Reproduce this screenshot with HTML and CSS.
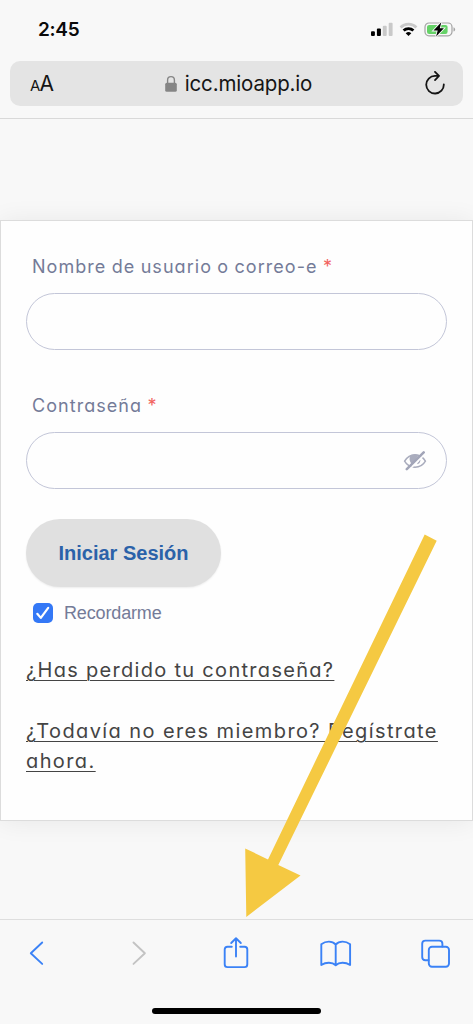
FILE: index.html
```html
<!DOCTYPE html>
<html lang="es">
<head>
<meta charset="utf-8">
<meta name="viewport" content="width=device-width, initial-scale=1">
<title>icc.mioapp.io</title>
<link rel="stylesheet" href="styles.css">
</head>
<body>
<div class="phone">
  <header class="browser-top">
    <div class="status">
      <span class="time">2:45</span>
      <svg class="status-icons" width="86" height="16" viewBox="0 0 86 16">
        <rect x="0" y="9.3" width="3.9" height="4.7" rx="1" fill="#000"/>
        <rect x="5.9" y="6.6" width="4" height="7.4" rx="1" fill="#000"/>
        <rect x="11.800" y="3.8" width="3.9" height="10.2" rx="1" fill="#c9c9c9"/>
        <rect x="17.700" y=".7" width="3.9" height="13.3" rx="1" fill="#c9c9c9"/>
        <path d="M29.600 5.400a11.200 11.200 0 0 1 15.800 0" fill="none" stroke="#c9c9c9" stroke-width="2.8"/>
        <path d="M32.600 8.600a7 7 0 0 1 9.800 0" fill="none" stroke="#000" stroke-width="2.8"/>
        <path d="M34.700 11.300a4.200 4.200 0 0 1 5.600 0L37.500 14z" fill="#000"/>
        <rect x="54" y="1" width="27" height="12.8" rx="4" fill="none" stroke="#a3a3a3" stroke-width="1.2"/>
        <path d="M82.500 5.300q1.600.4 1.600 2.100t-1.600 2.100z" fill="#a3a3a3"/>
        <rect x="56" y="2.900" width="20.600" height="9" rx="2.200" fill="#65d267"/>
        <path d="M70.300.2 62.500 8.500h4.200l-1.600 6 7.800-8.200h-4.100z" fill="#000" stroke="#f8f8f8" stroke-width="1.800" paint-order="stroke"/>
      </svg>
    </div>
    <div class="address">
      <span class="text-size"><span class="small-a">A</span>A</span>
      <span class="site">
        <svg width="12" height="18" viewBox="0 0 12 18"><path d="M2.600 8V5a3.400 3.400 0 0 1 6.800 0v3" fill="none" stroke="#858585" stroke-width="1.400"/><rect x=".2" y="7.700" width="11.600" height="9.100" rx="1.600" fill="#858585"/></svg>
        <span class="domain">icc.mioapp.io</span>
      </span>
      <svg class="reload" width="22" height="26" viewBox="0 0 22 26" fill="none" stroke="#151515" stroke-width="1.8" stroke-linecap="round" stroke-linejoin="round"><path d="M19.800 13.300A8.800 8.800 0 1 1 11 4.900h3.600M11 .9l4 4-4 4.200"/></svg>
    </div>
  </header>

  <main class="page">
    <form class="card">
      <label class="label user-label" for="user">Nombre de usuario o correo-e <span class="required">*</span></label>
      <div class="field"><input class="input" id="user" type="text"></div>
      <label class="label pass-label" for="pass">Contraseña <span class="required">*</span></label>
      <div class="field">
        <input class="input" id="pass" type="password">
        <svg width="24" height="20" viewBox="0 0 24 20"><path d="M1.600 10.200C4.200 5.800 8 3.700 12 3.700s8 2.100 10.400 6.500C20 14.400 16.300 16.300 12 16.300S4 14.400 1.600 10.200z" fill="none" stroke="#a9acbd" stroke-width="1.500"/><path d="M7.300 4.600C9.500 3.400 14 3.200 16 4.300L8.500 13C6.300 10.500 6 7 7.300 4.600z" fill="#a9acbd"/><path d="M14.400 12.700q2.300-1.200 2.600-3.600" fill="none" stroke="#a9acbd" stroke-width="1.200"/><path d="M5.600 19.400 22.200 2.600" stroke="#fefefe" stroke-width="1.600"/><path d="M3.800 18.200 20.700 1.400" stroke="#a2a5b8" stroke-width="2.500" stroke-linecap="round"/></svg>
      </div>
      <button class="submit" type="button">Iniciar Sesión</button>
      <label class="remember">
        <svg width="20" height="20" viewBox="0 0 20 20"><rect width="20" height="20" rx="5" fill="#3478f6"/><path d="m4.300 10.800 3.500 4.100L15.200 4.800" fill="none" stroke="#fff" stroke-width="2.200" stroke-linecap="round" stroke-linejoin="round"/></svg>
        <span>Recordarme</span>
      </label>
      <a class="link lost">¿Has perdido tu contraseña?</a>
      <a class="link join">¿Todavía no eres miembro? Regístrate<br>ahora.</a>
    </form>
  </main>

  <footer class="browser-bottom">
    <nav class="tools">
      <svg width="32" height="34" viewBox="0 0 32 34"><path d="M22.200 6.500 10.800 17.200l11.400 10.700"/></svg>
      <svg class="disabled" width="32" height="34" viewBox="0 0 32 34"><path d="M13.500 6.500 24.900 17.200 13.500 27.900"/></svg>
      <svg width="32" height="34" viewBox="0 0 32 34"><path d="M11.800 10.800H7.500q-2.800 0-2.800 2.800v14.600q0 2.900 2.800 2.900h17q2.800 0 2.800-2.900V13.600q0-2.800-2.800-2.800h-4.300M16 20.500V2.400M11.200 7 16 2.300 20.800 7"/></svg>
      <svg width="32" height="34" viewBox="0 0 32 34"><path d="M15.700 8.500C12.200 4.700 6 4.700 1.300 8.300v20.700c4.700-3.100 10.900-3.100 14.400.2 3.500-3.300 9.700-3.300 14.400-.2V8.300C25.500 4.700 19.200 4.700 15.700 8.500zV29"/></svg>
      <svg width="32" height="34" viewBox="0 0 32 34"><path d="M8.500 24.300H5.400q-3.200 0-3.200-3.200V7.800q0-3.200 3.200-3.200h13.800q3.200 0 3.200 3.200v2.700"/><rect x="8.800" y="10.700" width="20.200" height="20" rx="3.200"/></svg>
    </nav>
    <div class="home-bar"></div>
  </footer>

  <svg class="arrow" width="473" height="1024" viewBox="0 0 473 1024"><path d="m424.700 534.500 12 6.200L278.300 865l22.200 10.500L246.300 917l-1.100-68.600 22.800 11z" fill="#f5c942"/></svg>
</div>
</body>
</html>
```
FILE: styles.css
```css
* { box-sizing: border-box; }
body { margin: 0; background: #f8f8f8; font-family: Inter, "Liberation Sans", sans-serif; }
svg { display: block; flex: none; }
.phone { position: relative; width: 473px; height: 1024px; display: flex; flex-direction: column; overflow: hidden; }

.browser-top { height: 119px; border-bottom: 1px solid #d9d9d9; padding: 0 10px; }
.status { height: 61px; padding: 18px 6px 0 28px; display: flex; justify-content: space-between; align-items: flex-start; }
.time { font-size: 19px; line-height: 23px; font-weight: 600; letter-spacing: -0.3px; color: #0a0a0a; }
.status-icons { margin-top: 4px; }
.address { height: 45px; border-radius: 10px; background: #e4e4e4; display: flex; align-items: center; justify-content: space-between; padding: 0 17px 0 20px; color: #151515; }
.text-size { padding-top: 2px; font-size: 21px; line-height: 24px; width: 23px; letter-spacing: -0.8px; white-space: nowrap; }
.small-a { font-size: 15px; }
.site { display: flex; align-items: center; gap: 8px; }
.domain { font-size: 20.5px; line-height: 24px; letter-spacing: -0.15px; white-space: nowrap; }

.page { height: 800px; padding-top: 101px; background: #f8f8f8; }
.card { height: 601px; padding: 34px 26px 0 25px; border: 1px solid #dcdcdc; background: #fefefe; box-shadow: 0 1px 24px rgba(0, 0, 0, .07); display: flex; flex-direction: column; align-items: flex-start; }
.label { margin-left: 6px; height: 24px; font-size: 18px; line-height: 24px; letter-spacing: 1.05px; word-spacing: -0.8px; color: #747b98; white-space: nowrap; font-feature-settings: "cv11"; }
.required { color: #f2635f; }
.field { width: 421px; height: 57px; margin-top: 14px; padding: 0 19px 0 20px; border: 1px solid #c3c6d8; border-radius: 29px; display: flex; align-items: center; }
.input { flex: 1; min-width: 0; height: 40px; padding: 0; border: 0; outline: 0; background: transparent; }
.pass-label { margin-top: 44px; }
.submit { width: 195px; height: 68px; margin-top: 30px; padding: 0; border: 0; border-radius: 34px; background: #e0e0e0; box-shadow: 0 1px 2px rgba(0, 0, 0, .07); color: #2b62a9; font: bold 20px/24px "Liberation Sans", Arial, sans-serif; }
.remember { height: 24px; margin: 14px 0 0 7px; display: flex; align-items: center; gap: 11px; font: 18px/24px "Liberation Sans", Arial, sans-serif; letter-spacing: -0.15px; color: #747b98; }
.link { font-size: 20px; line-height: 30px; letter-spacing: 1.3px; color: #444; white-space: nowrap; text-decoration: underline; text-decoration-thickness: 1px; text-underline-offset: 3px; font-feature-settings: "cv11"; }
.lost { margin-top: 30px; }
.join { margin-top: 31px; letter-spacing: 1.4px; }

.browser-bottom { height: 105px; border-top: 1px solid #dedede; background: #f8f8f8; display: flex; flex-direction: column; align-items: center; }
.tools { width: 100%; height: 88px; padding: 16px 21px 0 20px; display: flex; justify-content: space-between; align-items: flex-start; fill: none; stroke: #3b82f6; stroke-width: 1.9; stroke-linecap: round; stroke-linejoin: round; }
.disabled { stroke: #c3c3c3; }
.home-bar { width: 169px; height: 6px; border-radius: 3px; background: #000; }
.arrow { position: absolute; left: 0; top: 0; pointer-events: none; }
```
